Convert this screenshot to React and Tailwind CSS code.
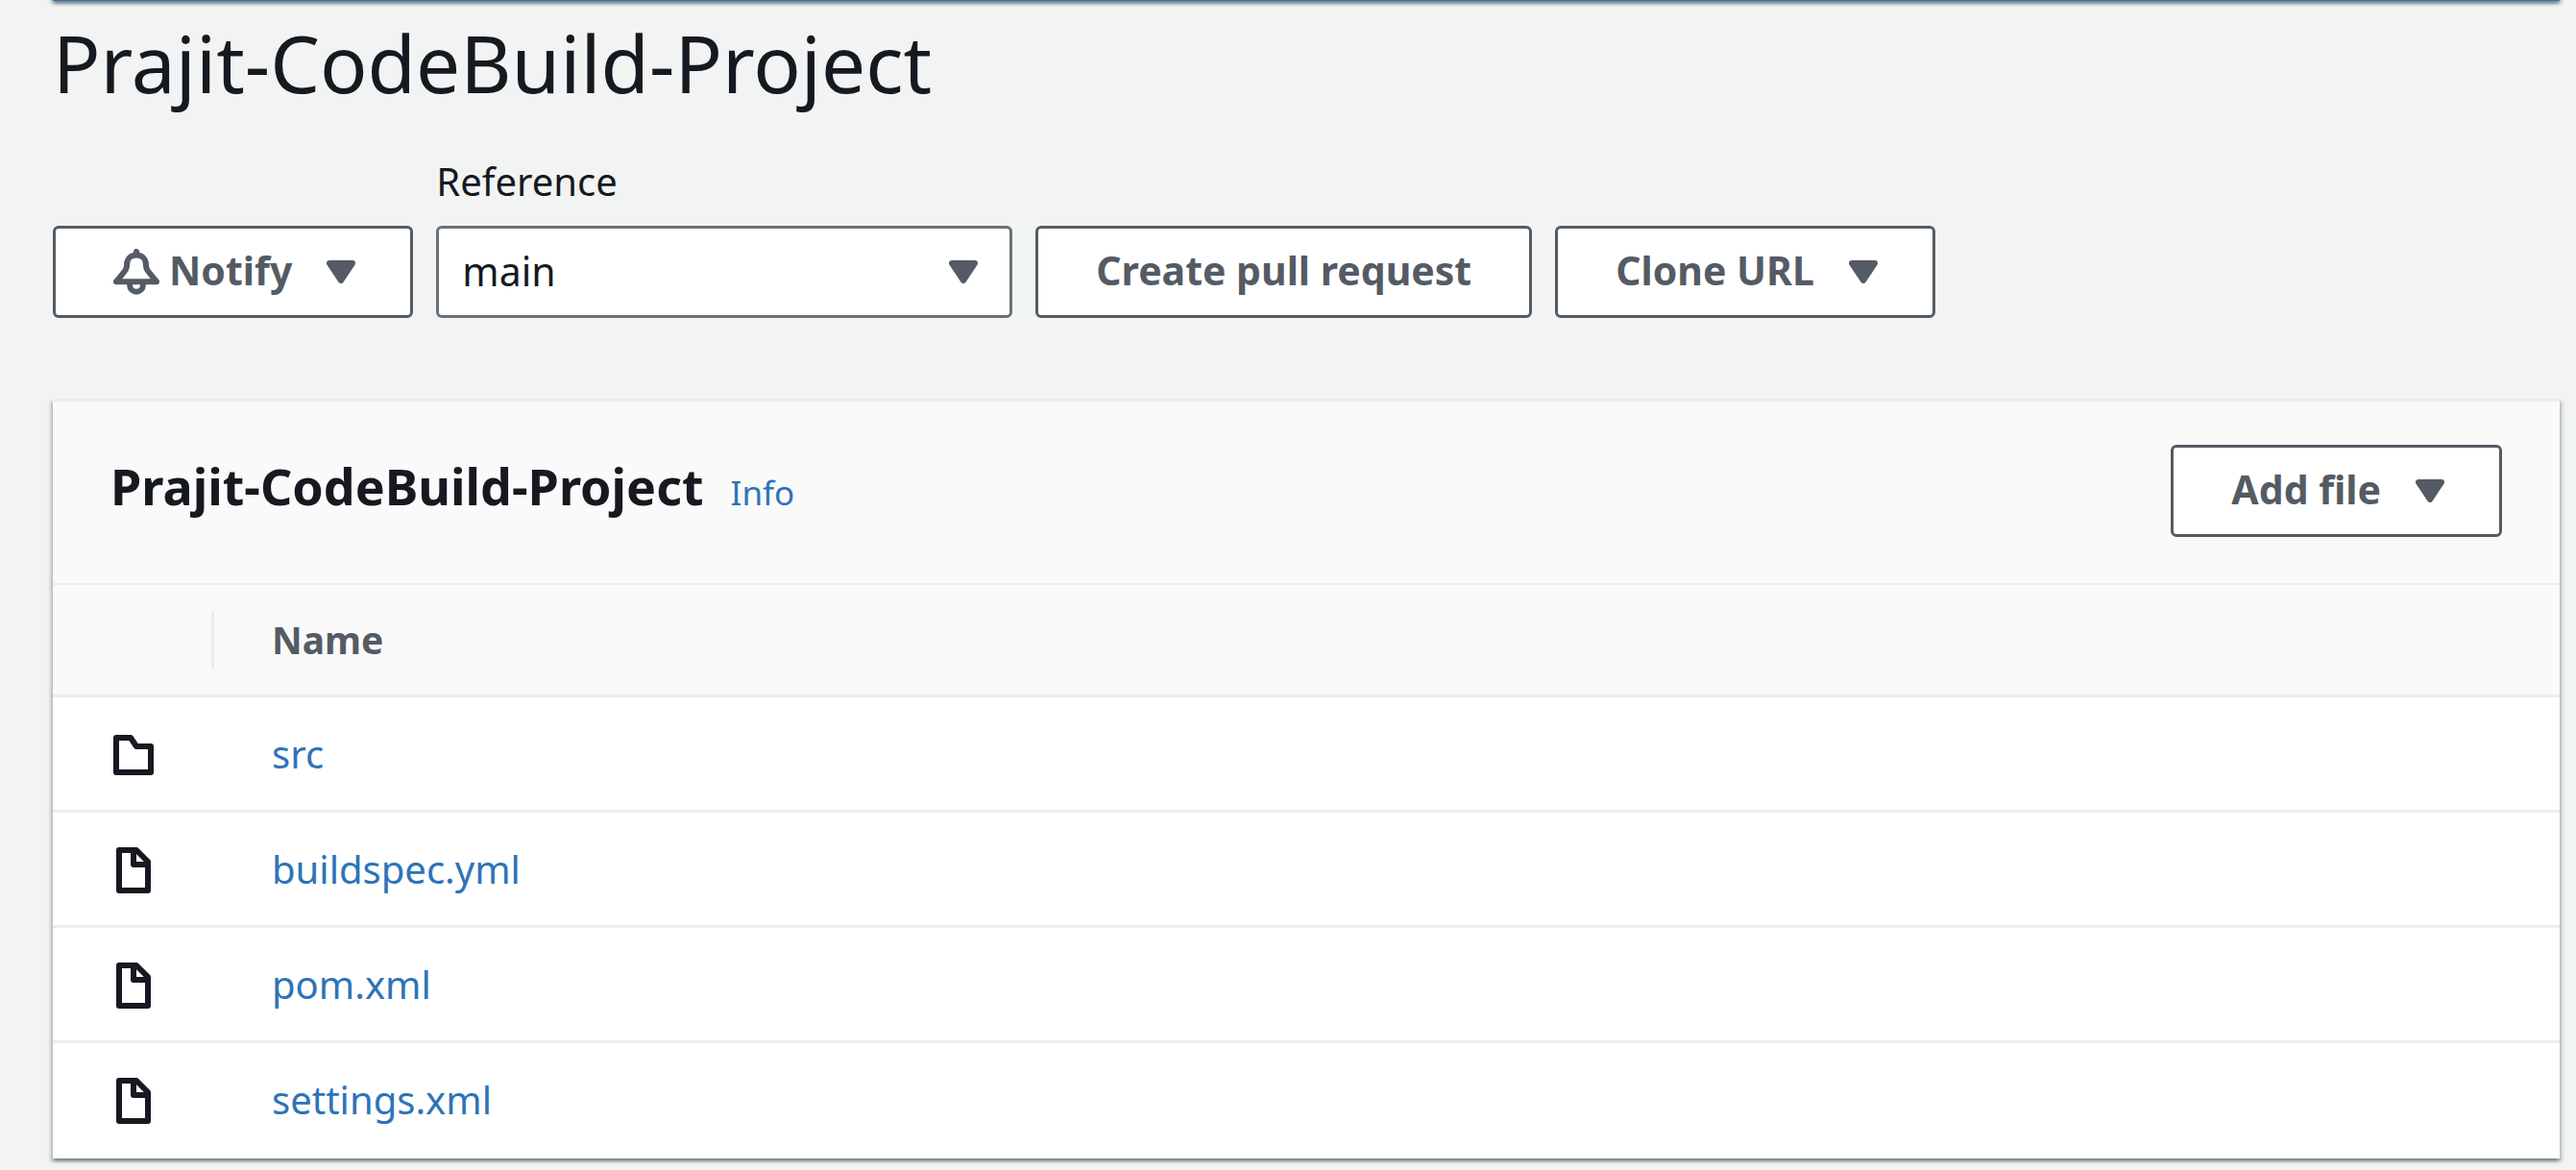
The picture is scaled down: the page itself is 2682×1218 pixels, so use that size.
const CARD_SHADOW =
  "shadow-[0_3px_3px_0_rgba(0,28,36,0.3),3px_3px_3px_0_rgba(0,28,36,0.15),-3px_3px_3px_0_rgba(0,28,36,0.15)]";

const FILES = [
  { name: "src", kind: "folder" },
  { name: "buildspec.yml", kind: "file" },
  { name: "pom.xml", kind: "file" },
  { name: "settings.xml", kind: "file" },
];

function Caret({ className = "" }) {
  return (
    <svg viewBox="0 0 30 24" className={`h-6 w-[30px] shrink-0 ${className}`} aria-hidden="true">
      <path
        d="M3 3H27L15 21z"
        fill="#545b64"
        stroke="#545b64"
        strokeWidth="6"
        strokeLinejoin="round"
      />
    </svg>
  );
}

function Icon({ children }) {
  return (
    <svg
      viewBox="0 0 16 16"
      className="block size-12 shrink-0"
      fill="none"
      stroke="currentColor"
      strokeWidth="2"
      strokeLinejoin="round"
      aria-hidden="true"
    >
      {children}
    </svg>
  );
}

function BellIcon() {
  return (
    <Icon>
      <path d="M8 2.2C6 2.2 4.7 3.6 4.7 5.4C4.7 7.4 4 7.6 1 11.4H15C12 7.6 11.3 7.4 11.3 5.4C11.3 3.6 10 2.2 8 2.2z" />
      <path d="M8 1v1" strokeLinecap="round" />
      <path d="M5.7 12v.6a2.3 2.3 0 0 0 4.6 0V12" />
    </Icon>
  );
}

function FileIcon({ kind }) {
  return (
    <Icon>
      {kind === "folder" ? (
        <path d="M2 14V2h5l2 3h5v9z" />
      ) : (
        <>
          <path d="M3 15V1h6l4 4v10z" />
          <path d="M8 1v5h5" />
        </>
      )}
    </Icon>
  );
}

function Button({ icon, menu = false, children }) {
  return (
    <button
      type="button"
      className="flex h-24 items-center rounded-md border-3 border-[#545b64] bg-white px-[60px] text-[41px] leading-12 font-bold whitespace-nowrap text-[#545b64]"
    >
      {icon}
      <span className={icon ? "pb-1 pl-2.5" : "pb-1"}>{children}</span>
      {menu && <Caret className="-mr-[3px] ml-9" />}
    </button>
  );
}

export default function App() {
  return (
    <div className="min-h-screen overflow-hidden bg-[#f2f3f3] pr-[17px] pb-3 pl-[55px] font-['Noto_Sans',sans-serif] text-[#16191f]">
      {/* Bottom edge of the notification bar that is scrolled out of view */}
      <div className={`-mt-[23px] h-6 bg-[#2e73b8] ${CARD_SHADOW}`} />

      <h1 className="mt-4 text-[82px] leading-24">Prajit-CodeBuild-Project</h1>

      <div className="mt-[52px] flex items-end gap-6">
        <Button icon={<BellIcon />} menu>
          Notify
        </Button>

        <div className="flex w-[600px] flex-col gap-[22px]">
          <label htmlFor="reference" className="text-[40px] leading-12">
            Reference
          </label>
          <div className="relative">
            <select
              id="reference"
              className="block h-24 w-full appearance-none rounded-md border-3 border-[#687078] bg-white pr-20 pl-6 text-[41px]"
            >
              <option>main</option>
            </select>
            <Caret className="pointer-events-none absolute top-9 right-9" />
          </div>
        </div>

        <Button>Create pull request</Button>
        <Button menu>Clone URL</Button>
      </div>

      <section className={`mt-[84px] border-t-3 border-[#eaeded] bg-white ${CARD_SHADOW}`}>
        <header className="flex items-center justify-between border-b-2 border-[#eaeded] bg-[#fafafa] pt-[45px] pr-[60px] pb-12 pl-[60px]">
          <div className="flex items-baseline gap-7 pb-2.5">
            <h2 className="text-[52px] leading-16 font-bold">Prajit-CodeBuild-Project</h2>
            <a href="#info" className="text-[35px] leading-12 text-[#2e73b8]">
              Info
            </a>
          </div>
          <Button menu>Add file</Button>
        </header>

        <table className="w-full border-separate border-spacing-0 text-left">
          <thead>
            <tr className="h-[117px] bg-[#fafafa] text-[39px] leading-12 text-[#545b64]">
              <th
                scope="col"
                aria-label="Type"
                className="w-[168px] border-b-3 border-[#eaeded] p-0"
              >
                <div className="h-[60px] border-r-3 border-[#eaeded]" />
              </th>
              <th scope="col" className="border-b-3 border-[#eaeded] py-0 pr-6 pl-[60px] font-bold">
                Name
              </th>
            </tr>
          </thead>
          <tbody>
            {FILES.map(({ name, kind }) => (
              <tr key={name} className="group h-[120px]">
                <td className="border-b-3 border-[#eaeded] py-0 pt-[3px] pl-[60px] group-last:border-transparent">
                  <FileIcon kind={kind} />
                </td>
                <td className="border-b-3 border-[#eaeded] py-0 pr-6 pl-[60px] text-[40px] leading-12 group-last:border-transparent">
                  <a href={`#${name}`} className="text-[#2e73b8]">
                    {name}
                  </a>
                </td>
              </tr>
            ))}
          </tbody>
        </table>
      </section>
    </div>
  );
}
